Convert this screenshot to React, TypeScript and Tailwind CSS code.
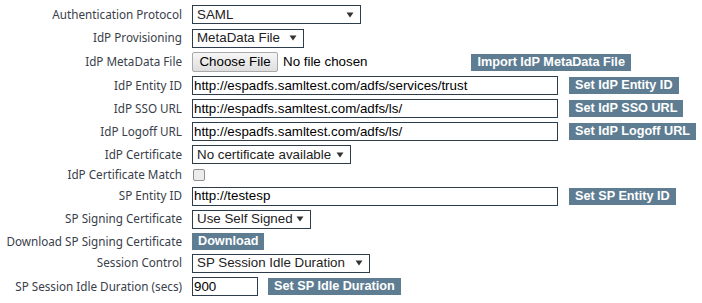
import React from "react";

const labelFont = { fontFamily: '"Noto Sans", "Open Sans", sans-serif' };
const fieldFont = { fontFamily: '"Liberation Sans", Arial, sans-serif' };

const Label = ({ children }: { children: React.ReactNode }) => (
  <div className="w-[182px] shrink-0 whitespace-nowrap text-right text-[11.7px] text-[#39404a]" style={labelFont}>
    {children}
  </div>
);

const Row = ({ label, h, children }: { label: string; h: string; children: React.ReactNode }) => (
  <div className={`flex items-center ${h}`}>
    <Label>{label}</Label>
    <div className="ml-[10px] flex items-center">{children}</div>
  </div>
);

const Select = ({ value, w }: { value: string; w: string }) => (
  <div
    className={`flex h-[19px] ${w} items-center justify-between border border-[#2e3d4c] bg-white pl-[4px] pr-[6px] text-[13.33px] text-[#222]`}
    style={fieldFont}
  >
    <span className="whitespace-nowrap leading-none">{value}</span>
    <svg width="8" height="6" viewBox="0 0 8 6">
      <path d="M0.5 0.5 H7.5 L4 5.5 Z" fill="#333" />
    </svg>
  </div>
);

const TextInput = ({ value, w }: { value: string; w: string }) => (
  <div
    className={`flex h-[19px] ${w} items-center border border-[#2e3d4c] bg-white pl-[1px] text-[13.33px] text-black`}
    style={fieldFont}
  >
    <span className="whitespace-nowrap leading-none">{value}</span>
  </div>
);

const Btn = ({ children, className = "" }: { children: React.ReactNode; className?: string }) => (
  <div
    className={`flex h-[17px] items-center whitespace-nowrap bg-[#5e7d92] px-[6px] text-[12.67px] font-bold text-white ${className}`}
    style={fieldFont}
  >
    <span className="leading-none">{children}</span>
  </div>
);

export default function App() {
  return (
    <div className="flex h-[303px] w-[702px] flex-col bg-white pt-[3px]">
      <Row label="Authentication Protocol" h="h-[23px]">
        <Select value="SAML" w="w-[169px]" />
      </Row>
      <Row label="IdP Provisioning" h="h-[24px]">
        <Select value="MetaData File" w="w-[112px]" />
      </Row>
      <Row label="IdP MetaData File" h="h-[24px]">
        <div
          className="flex h-[20px] w-[86px] items-center justify-center rounded-[2px] border border-[#a9a9a9] bg-gradient-to-b from-[#f6f6f6] to-[#dedede] text-[13.33px] text-black"
          style={fieldFont}
        >
          Choose File
        </div>
        <span className="ml-[5px] whitespace-nowrap text-[13.33px] text-black" style={fieldFont}>
          No file chosen
        </span>
        <Btn className="ml-[104px]">Import IdP MetaData File</Btn>
      </Row>
      <Row label="IdP Entity ID" h="h-[23px]">
        <TextInput value="http://espadfs.samltest.com/adfs/services/trust" w="w-[366px]" />
        <Btn className="ml-[11px]">Set IdP Entity ID</Btn>
      </Row>
      <Row label="IdP SSO URL" h="h-[23px]">
        <TextInput value="http://espadfs.samltest.com/adfs/ls/" w="w-[366px]" />
        <Btn className="ml-[11px]">Set IdP SSO URL</Btn>
      </Row>
      <Row label="IdP Logoff URL" h="h-[23px]">
        <TextInput value="http://espadfs.samltest.com/adfs/ls/" w="w-[366px]" />
        <Btn className="ml-[11px]">Set IdP Logoff URL</Btn>
      </Row>
      <Row label="IdP Certificate" h="h-[23px]">
        <Select value="No certificate available" w="w-[159px]" />
      </Row>
      <Row label="IdP Certificate Match" h="h-[18px]">
        <div className="ml-[1px] h-[12px] w-[12px] rounded-[2px] border border-[#8f8f8f] bg-[#ececec]" />
      </Row>
      <Row label="SP Entity ID" h="h-[24px]">
        <TextInput value="http://testesp" w="w-[366px]" />
        <Btn className="ml-[11px]">Set SP Entity ID</Btn>
      </Row>
      <Row label="SP Signing Certificate" h="h-[22px]">
        <Select value="Use Self Signed" w="w-[119px]" />
      </Row>
      <Row label="Download SP Signing Certificate" h="h-[23px]">
        <Btn>Download</Btn>
      </Row>
      <Row label="Session Control" h="h-[20px]">
        <Select value="SP Session Idle Duration" w="w-[178px]" />
      </Row>
      <Row label="SP Session Idle Duration (secs)" h="h-[27px]">
        <TextInput value="900" w="w-[66px]" />
        <Btn className="ml-[10px]">Set SP Idle Duration</Btn>
      </Row>
    </div>
  );
}
